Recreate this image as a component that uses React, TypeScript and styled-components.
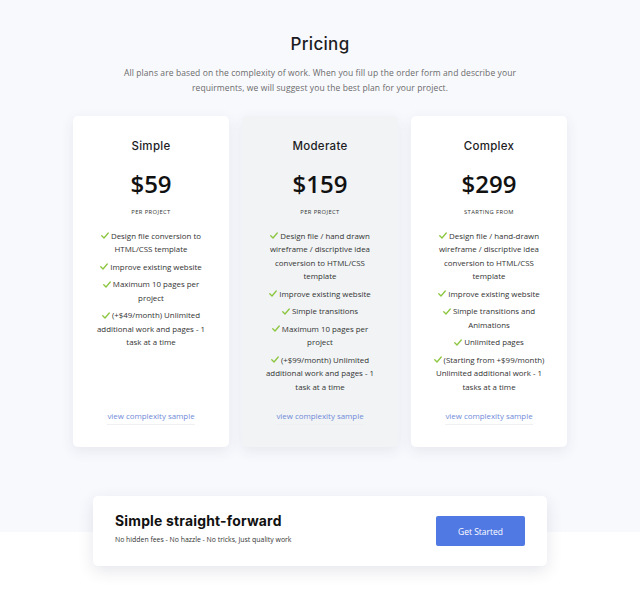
import React from "react";
import styled, { createGlobalStyle } from "styled-components";

const Global = createGlobalStyle`
  html, body { margin: 0; padding: 0; background: #ffffff; }
  body { font-family: "Open Sans", "Liberation Sans", sans-serif; -webkit-font-smoothing: antialiased; }
  * { box-sizing: border-box; }
`;

const Page = styled.div`
  min-height: 606px;
  background: linear-gradient(to bottom, #f8f9fd 0, #f8f9fd 532px, #ffffff 532px);
  padding-top: 33px;
  display: flex;
  flex-direction: column;
  align-items: center;
`;

const Title = styled.h1`
  margin: 0;
  font-family: "Inter", "Noto Sans", sans-serif;
  font-weight: 500;
  font-size: 17px;
  line-height: 22px;
  color: #1d1d1f;
  letter-spacing: 0.3px;
`;

const Lead = styled.p`
  margin: 10px 0 0;
  width: 420px;
  text-align: center;
  font-size: 8.5px;
  line-height: 15px;
  color: #6b6b6b;
  letter-spacing: 0.1px;
`;

const Cards = styled.div`
  margin-top: 20.5px;
  width: 494px;
  display: grid;
  grid-template-columns: repeat(3, 1fr);
  gap: 13px;
`;

const Card = styled.div<{ $muted?: boolean }>`
  background: ${(p) => (p.$muted ? "#f1f3f5" : "#ffffff")};
  border-radius: 5px;
  box-shadow: 0 4px 14px rgba(40, 50, 90, 0.09);
  padding: 22px 18px 22px;
  display: flex;
  flex-direction: column;
  align-items: center;
  text-align: center;
`;

const PlanName = styled.div`
  font-family: "Inter", "Noto Sans", sans-serif;
  font-weight: 500;
  font-size: 11.5px;
  line-height: 16px;
  color: #1d1d1f;
  letter-spacing: 0.3px;
`;

const Price = styled.div`
  margin-top: 15px;
  font-size: 24px;
  font-weight: 600;
  line-height: 30px;
  color: #111;
`;

const PriceNote = styled.div`
  margin-top: 8px;
  font-size: 5.8px;
  line-height: 10px;
  letter-spacing: 0.4px;
  text-transform: uppercase;
  color: #333;
`;

const Features = styled.ul`
  list-style: none;
  margin: 13px 0 0;
  padding: 0;
  display: flex;
  flex-direction: column;
  gap: 4px;
  width: 118px;
`;

const Feature = styled.li`
  font-size: 7.9px;
  line-height: 13.5px;
  color: #333;
`;

const Check = styled.svg`
  width: 8px;
  height: 7px;
  margin-right: 2px;
  vertical-align: -0.5px;
`;

const SampleLink = styled.a`
  margin-top: auto;
  padding-top: 16px;
  font-size: 7.9px;
  line-height: 12px;
  color: #6f8ad8;
  text-decoration: none;
  padding-bottom: 2px;
  border-bottom: 1px solid #eef0f4;
`;

const Banner = styled.div`
  margin-top: 49px;
  width: 454px;
  height: 70px;
  background: #fff;
  border-radius: 5px;
  box-shadow: 0 5px 16px rgba(40, 50, 90, 0.12);
  padding: 0 22px;
  display: flex;
  align-items: center;
  justify-content: space-between;
`;

const BannerText = styled.div`
  display: flex;
  flex-direction: column;
  gap: 5px;
  margin-top: -6px;
`;

const BannerTitle = styled.div`
  font-family: "Inter", "Noto Sans", sans-serif;
  font-weight: 700;
  font-size: 13.9px;
  line-height: 18px;
  color: #111;
  letter-spacing: 0.2px;
`;

const BannerSub = styled.div`
  font-size: 6.9px;
  line-height: 10px;
  color: #333;
`;

const Button = styled.button`
  width: 89px;
  height: 30px;
  border: none;
  border-radius: 2px;
  background: #5179e4;
  color: #fff;
  font-family: "Open Sans", sans-serif;
  font-size: 8.5px;
  cursor: pointer;
`;

const CheckIcon = () => (
  <Check viewBox="0 0 16 14">
    <path d="M1.5 7.5 L6 12 L14.5 2" fill="none" stroke="#8cc63f" strokeWidth="2.6" strokeLinecap="round" strokeLinejoin="round" />
  </Check>
);

const plans = [
  {
    name: "Simple",
    price: "$59",
    note: "per project",
    features: [
      "Design file conversion to HTML/CSS template",
      "Improve existing website",
      "Maximum 10 pages per project",
      "(+$49/month) Unlimited additional work and pages - 1 task at a time",
    ],
  },
  {
    name: "Moderate",
    price: "$159",
    note: "per project",
    muted: true,
    features: [
      "Design file / hand drawn wireframe / discriptive idea conversion to HTML/CSS template",
      "Improve existing website",
      "Simple transitions",
      "Maximum 10 pages per project",
      "(+$99/month) Unlimited additional work and pages - 1 task at a time",
    ],
  },
  {
    name: "Complex",
    price: "$299",
    note: "starting from",
    features: [
      "Design file / hand-drawn wireframe / discriptive idea conversion to HTML/CSS template",
      "Improve existing website",
      "Simple transitions and Animations",
      "Unlimited pages",
      "(Starting from +$99/month) Unlimited additional work - 1 tasks at a time",
    ],
  },
];

export default function App() {
  return (
    <>
      <Global />
      <Page>
        <Title>Pricing</Title>
        <Lead>
          All plans are based on the complexity of work. When you fill up the order form and describe your
          requirments, we will suggest you the best plan for your project.
        </Lead>
        <Cards>
          {plans.map((p) => (
            <Card key={p.name} $muted={p.muted}>
              <PlanName>{p.name}</PlanName>
              <Price>{p.price}</Price>
              <PriceNote>{p.note}</PriceNote>
              <Features>
                {p.features.map((f) => (
                  <Feature key={f}>
                    <CheckIcon />
                    {f}
                  </Feature>
                ))}
              </Features>
              <SampleLink href="#">view complexity sample</SampleLink>
            </Card>
          ))}
        </Cards>
        <Banner>
          <BannerText>
            <BannerTitle>Simple straight-forward</BannerTitle>
            <BannerSub>No hidden fees - No hazzle - No tricks, Just quality work</BannerSub>
          </BannerText>
          <Button>Get Started</Button>
        </Banner>
      </Page>
    </>
  );
}
